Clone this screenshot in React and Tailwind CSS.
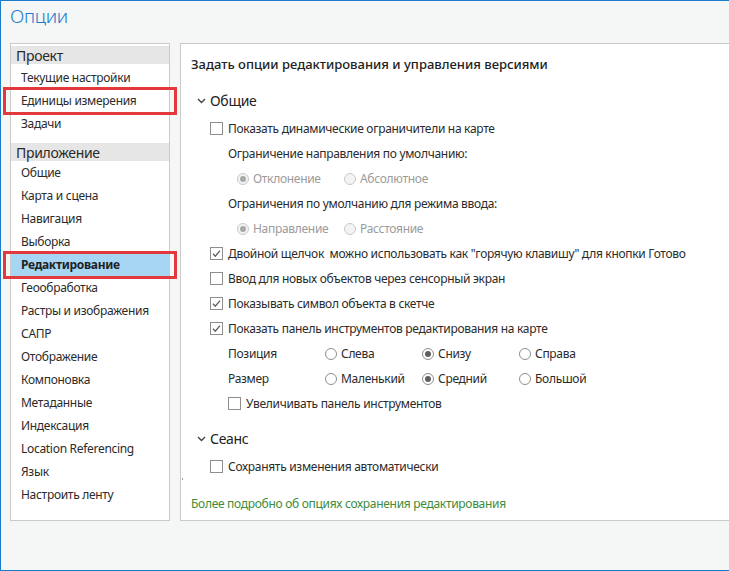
import React from 'react'

const font = { fontFamily: '"Noto Sans", "Open Sans", sans-serif' }

function Checkbox({ checked }) {
  return (
    <span className="w-[13px] h-[13px] border border-[#8e8e8e] bg-white flex items-center justify-center shrink-0">
      {checked && (
        <svg width="11" height="11" viewBox="0 0 11 11">
          <path d="M2 5.8 L4.3 8.2 L9 2.6" fill="none" stroke="#5f5f5f" strokeWidth="1.3" />
        </svg>
      )}
    </span>
  )
}

function Radio({ checked, disabled }) {
  return (
    <span
      className={`w-[12px] h-[12px] rounded-full border flex items-center justify-center shrink-0 ${
        disabled ? 'border-[#c9c9c9] bg-[#f3f3f3]' : 'border-[#8e8e8e] bg-white'
      }`}
    >
      {checked && (
        <span className={`w-[6px] h-[6px] rounded-full ${disabled ? 'bg-[#a8a8a8]' : 'bg-[#606060]'}`} />
      )}
    </span>
  )
}

function Chevron() {
  return (
    <svg width="9" height="6" viewBox="0 0 9 6" className="shrink-0">
      <path d="M1 1 L4.5 4.5 L8 1" fill="none" stroke="#444" strokeWidth="1.4" />
    </svg>
  )
}

function CheckRow({ checked, children, className = '' }) {
  return (
    <div className={`h-[25px] flex items-center gap-[5px] ${className}`}>
      <Checkbox checked={checked} />
      <span className="whitespace-pre">{children}</span>
    </div>
  )
}

function RadioItem({ checked, disabled, label, className = '' }) {
  return (
    <div className={`flex items-center gap-[4px] ${className}`}>
      <Radio checked={checked} disabled={disabled} />
      <span className={disabled ? 'text-[#9b9b9b]' : ''}>{label}</span>
    </div>
  )
}

const appItems = [
  'Общие',
  'Карта и сцена',
  'Навигация',
  'Выборка',
  'Редактирование',
  'Геообработка',
  'Растры и изображения',
  'САПР',
  'Отображение',
  'Компоновка',
  'Метаданные',
  'Индексация',
  'Location Referencing',
  'Язык',
  'Настроить ленту',
]

function NavItem({ label, active }) {
  return (
    <div
      className={`h-[23px] flex items-center pl-[10px] ${
        active ? 'bg-[#a6d6f4] font-bold text-[#1f1f1f]' : ''
      }`}
    >
      {label}
    </div>
  )
}

export default function App() {
  return (
    <div
      className="relative w-[729px] h-[571px] overflow-hidden bg-[#f5f6f6] border-l border-t border-b border-[#1a7bc9] text-[12px] tracking-[-0.3px] text-[#2b2b2b]"
      style={font}
    >
      <div className="h-[42px] pl-[9px] pt-[2px] text-[19px] font-light tracking-[-0.3px] text-[#1b7dca] leading-[26px]">
        Опции
      </div>

      <div className="flex gap-[10px] pl-[9px]">
        <div className="w-[160px] h-[478px] shrink-0 bg-white border border-[#cacaca] pt-[2px]">
          <div className="h-[18px] flex items-center pl-[5px] bg-[#e6e6e6] text-[14px] text-[#2a2a2a]">Проект</div>
          <div className="mt-[2px]">
            <NavItem label="Текущие настройки" />
            <NavItem label="Единицы измерения" />
            <NavItem label="Задачи" />
          </div>
          <div className="h-[18px] mt-[8px] flex items-center pl-[5px] bg-[#e6e6e6] text-[14px] text-[#2a2a2a]">
            Приложение
          </div>
          {appItems.map((it) => (
            <NavItem key={it} label={it} active={it === 'Редактирование'} />
          ))}
        </div>

        <div className="relative w-[560px] h-[478px] shrink-0 bg-white border border-[#cacaca] pl-[10px] pt-[8px]">
          <div className="h-[25px] flex items-center text-[13px] font-medium tracking-normal text-[#222]">
            Задать опции редактирования и управления версиями
          </div>

          <div className="h-[25px] mt-[11px] flex items-center gap-[4px] pl-[6px] text-[14px] text-[#222]">
            <Chevron />
            <span>Общие</span>
          </div>

          <div className="pl-[19px] mt-[3px]">
            <CheckRow>Показать динамические ограничители на карте</CheckRow>
            <div className="pl-[18px]">
              <div className="h-[25px] flex items-center">Ограничение направления по умолчанию:</div>
              <div className="h-[25px] flex items-center pl-[9px]">
                <RadioItem disabled checked label="Отклонение" className="w-[107px]" />
                <RadioItem disabled label="Абсолютное" />
              </div>
              <div className="h-[25px] flex items-center">Ограничения по умолчанию для режима ввода:</div>
              <div className="h-[25px] flex items-center pl-[9px]">
                <RadioItem disabled checked label="Направление" className="w-[107px]" />
                <RadioItem disabled label="Расстояние" />
              </div>
            </div>
            <CheckRow checked>Двойной щелчок  можно использовать как "горячую клавишу" для кнопки Готово</CheckRow>
            <CheckRow>Ввод для новых объектов через сенсорный экран</CheckRow>
            <CheckRow checked>Показывать символ объекта в скетче</CheckRow>
            <CheckRow checked>Показать панель инструментов редактирования на карте</CheckRow>
            <div className="pl-[18px]">
              <div className="h-[25px] flex items-center">
                <span className="w-[97px]">Позиция</span>
                <RadioItem label="Слева" className="w-[97px]" />
                <RadioItem checked label="Снизу" className="w-[97px]" />
                <RadioItem label="Справа" />
              </div>
              <div className="h-[25px] flex items-center">
                <span className="w-[97px]">Размер</span>
                <RadioItem label="Маленький" className="w-[97px]" />
                <RadioItem checked label="Средний" className="w-[97px]" />
                <RadioItem label="Большой" />
              </div>
              <CheckRow>Увеличивать панель инструментов</CheckRow>
            </div>
          </div>

          <div className="h-[25px] mt-[10px] flex items-center gap-[4px] pl-[6px] text-[14px] text-[#222]">
            <Chevron />
            <span>Сеанс</span>
          </div>
          <div className="pl-[19px] mt-[3px]">
            <CheckRow>Сохранять изменения автоматически</CheckRow>
          </div>

          <div className="h-[25px] mt-[12px] flex items-center text-[#3d8b3d]">
            Более подробно об опциях сохранения редактирования
          </div>

          <span className="absolute left-[1px] top-[434px] w-[1px] h-[2px] bg-[#9a9a9a]" />
        </div>
      </div>

      <div className="absolute left-[2px] top-[86px] w-[174px] h-[28px] border-[3px] border-[#e3393c]" />
      <div className="absolute left-[2px] top-[250px] w-[174px] h-[28px] border-[3px] border-[#e3393c]" />
    </div>
  )
}
